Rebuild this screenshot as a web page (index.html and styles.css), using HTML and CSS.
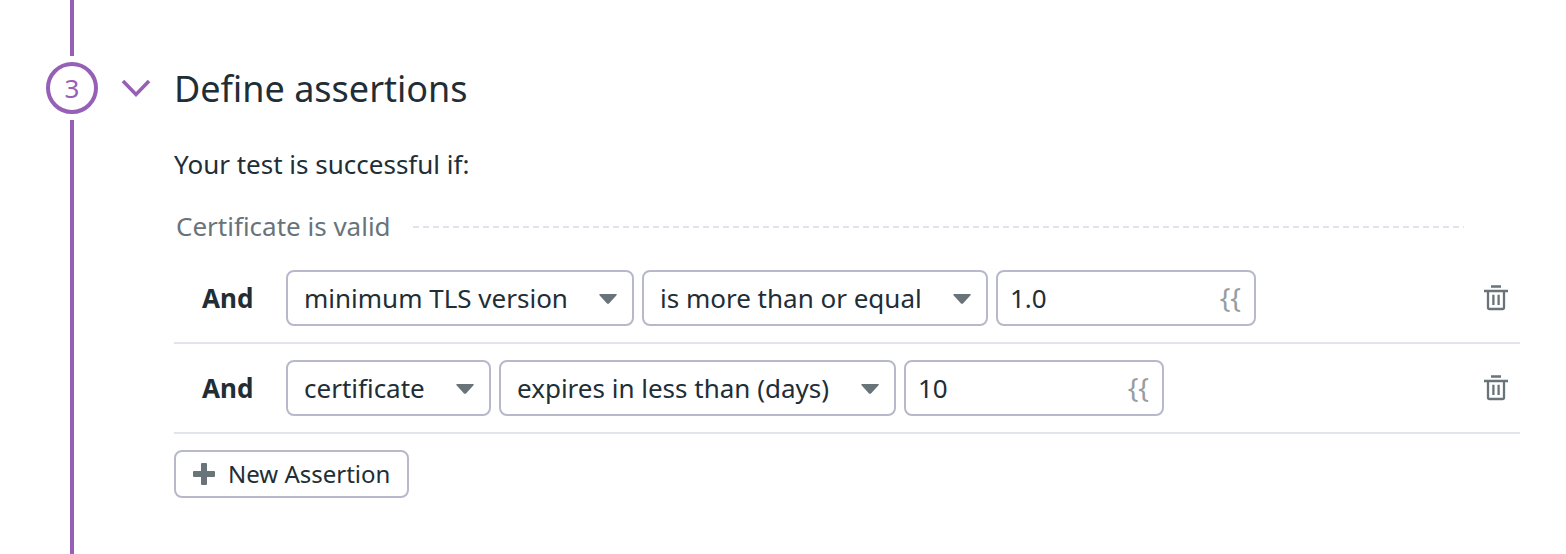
FILE: index.html
```html
<!DOCTYPE html>
<html lang="en">
<head>
<meta charset="utf-8">
<title>Define assertions</title>
<link rel="stylesheet" href="styles.css">
</head>
<body>
<svg class="sprite" aria-hidden="true">
  <symbol id="caret" viewBox="0 0 18 10"><path d="M1 0h16q1.500.3.500 1.200L10 9.400q-1 .9-2 0L.5 1.200Q-.3 0 1 0z" fill="currentColor"/></symbol>
  <symbol id="trash" viewBox="0 0 24 26"><path d="M7 1.500h10M0 6h24M4 6v16.500q0 1.500 1.500 1.500h13q1.500 0 1.500-1.500V6M9.400 9.700v10.300M14.600 9.700v10.300" fill="none" stroke="currentColor" stroke-width="2.300"/></symbol>
</svg>
<main class="step">
  <div class="rail">
    <span class="rail-line rail-line-top"></span>
    <span class="rail-number">3</span>
    <span class="rail-line rail-line-bottom"></span>
  </div>
  <section class="content">
    <header class="head">
      <button class="toggle" type="button" aria-label="Collapse section">
        <svg width="30" height="20" viewBox="0 0 30 20"><path d="M2 2l13 13.500L28 2" fill="none" stroke="currentColor" stroke-width="3.600"/></svg>
      </button>
      <h1 class="title">Define assertions</h1>
    </header>
    <div class="body">
      <p class="intro">Your test is successful if:</p>
      <div class="base"><span>Certificate is valid</span><span class="dashes"></span></div>
      <ul class="rows">
        <li class="row">
          <strong class="and">And</strong>
          <div class="fields">
            <div class="select"><select aria-label="Property"><option>minimum TLS version</option></select><svg class="caret"><use href="#caret"/></svg></div>
            <div class="select"><select aria-label="Operator"><option>is more than or equal</option></select><svg class="caret"><use href="#caret"/></svg></div>
            <div class="value"><input type="text" value="1.0" aria-label="Value"><span class="braces">{{</span></div>
          </div>
          <button class="delete" type="button" aria-label="Delete assertion"><svg width="24" height="26"><use href="#trash"/></svg></button>
        </li>
        <li class="row">
          <strong class="and">And</strong>
          <div class="fields">
            <div class="select"><select aria-label="Property"><option>certificate</option></select><svg class="caret"><use href="#caret"/></svg></div>
            <div class="select"><select aria-label="Operator"><option>expires in less than (days)</option></select><svg class="caret"><use href="#caret"/></svg></div>
            <div class="value"><input type="text" value="10" aria-label="Value"><span class="braces">{{</span></div>
          </div>
          <button class="delete" type="button" aria-label="Delete assertion"><svg width="24" height="26"><use href="#trash"/></svg></button>
        </li>
      </ul>
      <button class="new" type="button">
        <svg width="22" height="22" viewBox="0 0 22 22"><path d="M9 0h4q1 0 1 1v7h7q1 0 1 1v4q0 1-1 1h-7v7q0 1-1 1H9q-1 0-1-1v-7H1q-1 0-1-1V9q0-1 1-1h7V1q0-1 1-1z" fill="currentColor"/></svg>
        <span>New Assertion</span>
      </button>
    </div>
  </section>
</main>
</body>
</html>
```
FILE: styles.css
```css
* { box-sizing: border-box; }

body {
  margin: 0;
  background: #fff;
  color: #212e36;
  font: 26px/36px "Noto Sans", sans-serif;
}

button, input, select {
  font: inherit;
  color: inherit;
  margin: 0;
}

.sprite { display: none; }

.step {
  display: flex;
  min-height: 100vh;
  padding: 0 46px;
}

.rail {
  display: flex;
  flex-direction: column;
  align-items: center;
  gap: 6px;
  width: 52px;
  flex: none;
}

.rail-line { width: 4px; background: #9660b6; }
.rail-line-top { height: 56px; }
.rail-line-bottom { flex: 1; }

.rail-number {
  display: flex;
  align-items: center;
  justify-content: center;
  width: 52px;
  height: 52px;
  border: 4px solid #9660b6;
  border-radius: 50%;
  color: #9660b6;
}

.content {
  flex: 1;
  min-width: 0;
  padding: 62px 0 56px 22px;
}

.head {
  display: flex;
  align-items: center;
  gap: 22px;
  height: 54px;
}

.toggle, .delete {
  display: flex;
  padding: 0;
  border: 0;
  background: none;
}

.toggle { color: #9660b6; width: 32px; justify-content: center; }

.title {
  margin: 0;
  font-size: 36px;
  font-weight: 400;
  line-height: 52px;
}

.body { padding: 30px 0 0 54px; }
.intro { margin: 0 0 26px; }

.base {
  display: flex;
  align-items: center;
  gap: 22px;
  padding: 0 56px 0 2px;
  color: #69737a;
}

.dashes {
  flex: 1;
  height: 4px;
  background: repeating-linear-gradient(90deg, #e1e3ec 0 6px, transparent 6px 10px) bottom / 100% 2px no-repeat;
}

.rows {
  list-style: none;
  margin: 10px 0 16px;
  padding: 0;
}

.row {
  display: flex;
  align-items: center;
  padding: 16px 12px 16px 28px;
  border-bottom: 2px solid #e1e4ec;
}

.and { width: 84px; flex: none; }

.fields {
  display: flex;
  gap: 8px;
  flex: 1;
}

.select, .value { position: relative; display: flex; }

.select select, .value input {
  height: 56px;
  border: 2px solid #b7b9cb;
  border-radius: 8px;
  background: #fff;
}

.select select {
  appearance: none;
  padding: 0 64px 0 16px;
}

.value input { width: 260px; padding: 0 48px 0 12px; }

.caret {
  position: absolute;
  right: 17px;
  top: 24px;
  width: 18px;
  height: 10px;
  color: #69737a;
  pointer-events: none;
}

.braces {
  position: absolute;
  right: 15px;
  top: 9px;
  font-size: 28px;
  color: #969da1;
}

.delete { color: #69737a; }

.new {
  display: flex;
  align-items: center;
  gap: 13px;
  height: 48px;
  padding: 0 17px;
  border: 2px solid #b7b9cb;
  border-radius: 8px;
  background: #fff;
  font-size: 24px;
}

.new svg { color: #69737a; }
```
